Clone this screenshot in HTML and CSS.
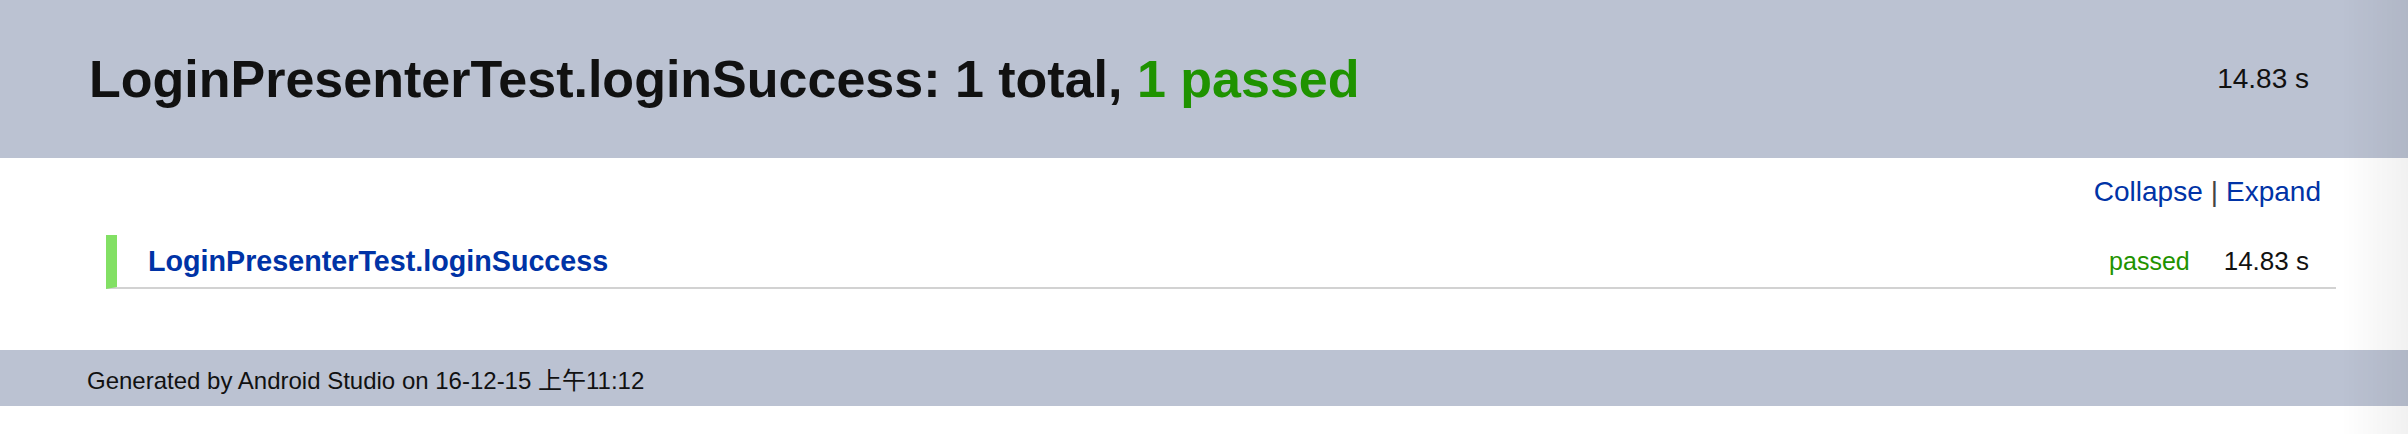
FILE: index.html
```html
<!DOCTYPE html>
<html lang="en">
<head>
<meta charset="utf-8">
<title>Test results - LoginPresenterTest.loginSuccess</title>
<link rel="stylesheet" href="styles.css">
</head>
<body>
<header class="summary">
  <h1 class="title">LoginPresenterTest.loginSuccess: 1 total, <span class="ok">1 passed</span></h1>
  <div class="duration">14.83 s</div>
</header>
<main class="content">
  <div class="toggles"><a href="#" class="link">Collapse</a><span class="sep">|</span><a href="#" class="link">Expand</a></div>
  <div class="test-row">
    <a href="#" class="test-name">LoginPresenterTest.loginSuccess</a>
    <span class="status">passed</span>
    <span class="time">14.83 s</span>
  </div>
</main>
<footer class="footer">Generated by Android Studio on 16-12-15 上午11:12</footer>
<div class="edge-shade"></div>
</body>
</html>
```
FILE: styles.css
```css
html, body {
  margin: 0;
  padding: 0;
  background: #ffffff;
}
body {
  font-family: "Liberation Sans", Arial, "Noto Sans CJK SC", sans-serif;
  color: #111111;
}
.summary {
  height: 158px;
  background: #bbc2d2;
  display: flex;
  align-items: center;
  justify-content: space-between;
  padding: 0 99px 0 89px;
}
.title {
  margin: 0;
  font-size: 52px;
  font-weight: bold;
  color: #111111;
  line-height: 1;
}
.ok {
  color: #1f9300;
}
.duration {
  font-size: 28px;
  color: #111111;
}
.content {
  padding: 18px 72px 0 106px;
  height: 192px;
  box-sizing: border-box;
}
.toggles {
  display: flex;
  justify-content: flex-end;
  align-items: baseline;
  gap: 8px;
  font-size: 28px;
  line-height: 32px;
  padding-right: 15px;
}
.link {
  color: #0033a6;
  text-decoration: none;
}
.sep {
  color: #444444;
}
.test-row {
  margin-top: 27px;
  height: 52px;
  border-left: 11px solid #82e064;
  border-bottom: 2px solid #d2d2d2;
  display: flex;
  align-items: center;
  padding: 0 27px 0 31px;
  font-size: 26px;
}
.test-name {
  flex: 1;
  font-size: 28.7px;
  font-weight: bold;
  color: #0033a6;
  text-decoration: none;
}
.status {
  font-size: 25px;
  color: #1f9300;
  margin-right: 34px;
}
.time {
  color: #111111;
}
.footer {
  height: 56px;
  background: #bbc2d2;
  display: flex;
  align-items: center;
  padding-left: 87px;
  font-size: 24px;
  color: #111111;
}
.edge-shade {
  position: fixed;
  top: 0;
  right: 0;
  bottom: 0;
  width: 66px;
  pointer-events: none;
  background: linear-gradient(to right, rgba(0,0,0,0), rgba(0,0,0,0.055));
}
```
